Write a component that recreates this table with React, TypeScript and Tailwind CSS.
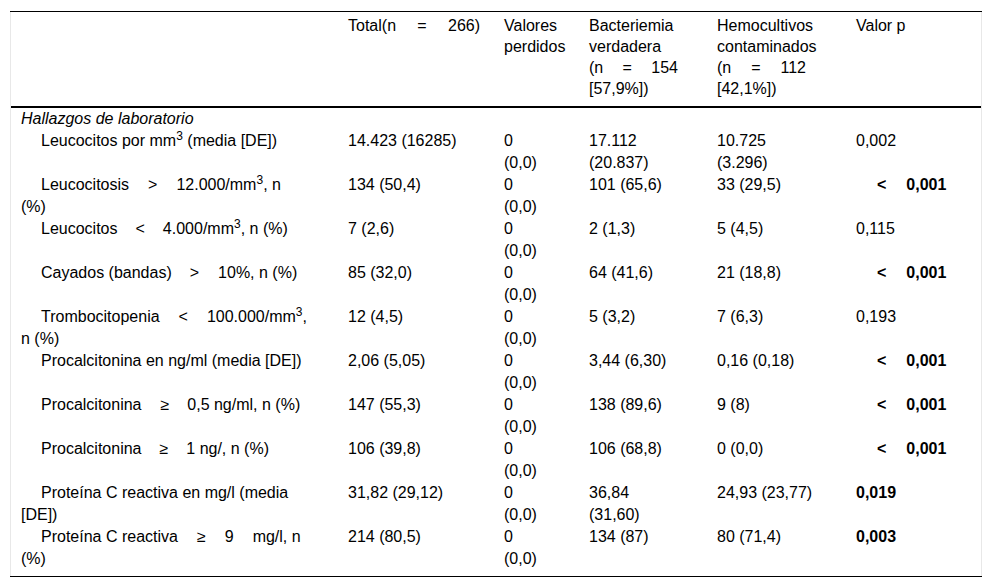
import type { ReactNode } from 'react';

// one line stretched to a fixed width, like the justified lines of the original table
const J = ({ w, children }: { w: string; children: ReactNode }) => (
  <div className={`${w} text-justify [text-align-last:justify]`}>{children}</div>
);

const Ind = ({ children }: { children: ReactNode }) => <div className="pl-5 whitespace-nowrap">{children}</div>;

const Lt = () => (
  <div className="pl-[21px] font-bold whitespace-nowrap">
    <span>&lt;</span>
    <span className="ml-[20px]">0,001</span>
  </div>
);

const Missing = () => (
  <>
    <div>0</div>
    <div>(0,0)</div>
  </>
);

interface Row {
  label: ReactNode;
  total: string;
  bact: ReactNode;
  hemo: ReactNode;
  p: ReactNode;
}

const rows: Row[] = [
  {
    label: <Ind>Leucocitos por mm<sup>3</sup> (media [DE])</Ind>,
    total: '14.423 (16285)',
    bact: <><div>17.112</div><div>(20.837)</div></>,
    hemo: <><div>10.725</div><div>(3.296)</div></>,
    p: '0,002',
  },
  {
    label: (
      <>
        <Ind>
          Leucocitosis<span className="mx-[19px]">&gt;</span>12.000/mm<sup>3</sup>, n
        </Ind>
        <div>(%)</div>
      </>
    ),
    total: '134 (50,4)',
    bact: '101 (65,6)',
    hemo: '33 (29,5)',
    p: <Lt />,
  },
  {
    label: (
      <Ind>
        Leucocitos<span className="mx-[18px]">&lt;</span>4.000/mm<sup>3</sup>, n (%)
      </Ind>
    ),
    total: '7 (2,6)',
    bact: '2 (1,3)',
    hemo: '5 (4,5)',
    p: '0,115',
  },
  {
    label: (
      <Ind>
        Cayados (bandas)<span className="ml-[18px] mr-[19px]">&gt;</span>10%, n (%)
      </Ind>
    ),
    total: '85 (32,0)',
    bact: '64 (41,6)',
    hemo: '21 (18,8)',
    p: <Lt />,
  },
  {
    label: (
      <>
        <Ind>
          Trombocitopenia<span className="mx-[19px]">&lt;</span>100.000/mm<sup>3</sup>,
        </Ind>
        <div>n (%)</div>
      </>
    ),
    total: '12 (4,5)',
    bact: '5 (3,2)',
    hemo: '7 (6,3)',
    p: '0,193',
  },
  {
    label: <Ind>Procalcitonina en ng/ml (media [DE])</Ind>,
    total: '2,06 (5,05)',
    bact: '3,44 (6,30)',
    hemo: '0,16 (0,18)',
    p: <Lt />,
  },
  {
    label: (
      <Ind>
        Procalcitonina<span className="ml-[19px] mr-[18px]">≥</span>0,5 ng/ml, n (%)
      </Ind>
    ),
    total: '147 (55,3)',
    bact: '138 (89,6)',
    hemo: '9 (8)',
    p: <Lt />,
  },
  {
    label: (
      <Ind>
        Procalcitonina<span className="mx-[18px]">≥</span>1 ng/, n (%)
      </Ind>
    ),
    total: '106 (39,8)',
    bact: '106 (68,8)',
    hemo: '0 (0,0)',
    p: <Lt />,
  },
  {
    label: (
      <>
        <Ind>Proteína C reactiva en mg/l (media</Ind>
        <div>[DE])</div>
      </>
    ),
    total: '31,82 (29,12)',
    bact: <><div>36,84</div><div>(31,60)</div></>,
    hemo: '24,93 (23,77)',
    p: <b>0,019</b>,
  },
  {
    label: (
      <>
        <Ind>
          Proteína C reactiva<span className="mx-[19px]">≥</span>9<span className="ml-[19px]">mg/l, n</span>
        </Ind>
        <div>(%)</div>
      </>
    ),
    total: '214 (80,5)',
    bact: '134 (87)',
    hemo: '80 (71,4)',
    p: <b>0,003</b>,
  },
];

const th = 'pl-[10px] pt-[3px] pb-[7px] align-top text-left font-normal leading-[21px] border-b-2 border-black';
const td = 'pl-[10px] align-top leading-[22px]';

export default function App() {
  return (
    <div className="min-h-[588px] bg-white pt-[12px] text-[16px] text-black" style={{ fontFamily: '"Liberation Sans", Arial, sans-serif' }}>
      <div className="ml-[10px] w-[972px] border-x border-[#e8e8e8] shadow-[0_-1px_0_#000,0_1px_0_#000]">
        <table className="w-full table-fixed border-separate border-spacing-0">
          <colgroup>
            <col className="w-[327px]" />
            <col className="w-[156px]" />
            <col className="w-[85px]" />
            <col className="w-[128px]" />
            <col className="w-[139px]" />
            <col className="w-[135px]" />
          </colgroup>
          <thead>
            <tr>
              <th className={th}></th>
              <th className={th}>
                <J w="w-[132px]">Total(n = 266)</J>
              </th>
              <th className={th}>
                <div>Valores</div>
                <div>perdidos</div>
              </th>
              <th className={th}>
                <div>Bacteriemia</div>
                <div>verdadera</div>
                <J w="w-[89px]">(n = 154</J>
                <div>[57,9%])</div>
              </th>
              <th className={th}>
                <div>Hemocultivos</div>
                <div>contaminados</div>
                <J w="w-[89px]">(n = 112</J>
                <div>[42,1%])</div>
              </th>
              <th className={th}>Valor p</th>
            </tr>
          </thead>
          <tbody>
            <tr>
              <td className={`${td} italic`} colSpan={6}>Hallazgos de laboratorio</td>
            </tr>
            {rows.map((r, i) => {
              const last = i === rows.length - 1 ? ' pb-[6px]' : '';
              return (
                <tr key={i}>
                  <td className={td + last}>{r.label}</td>
                  <td className={td + last}>{r.total}</td>
                  <td className={td + last}><Missing /></td>
                  <td className={td + last}>{r.bact}</td>
                  <td className={td + last}>{r.hemo}</td>
                  <td className={td + last}>{r.p}</td>
                </tr>
              );
            })}
          </tbody>
        </table>
      </div>
    </div>
  );
}
